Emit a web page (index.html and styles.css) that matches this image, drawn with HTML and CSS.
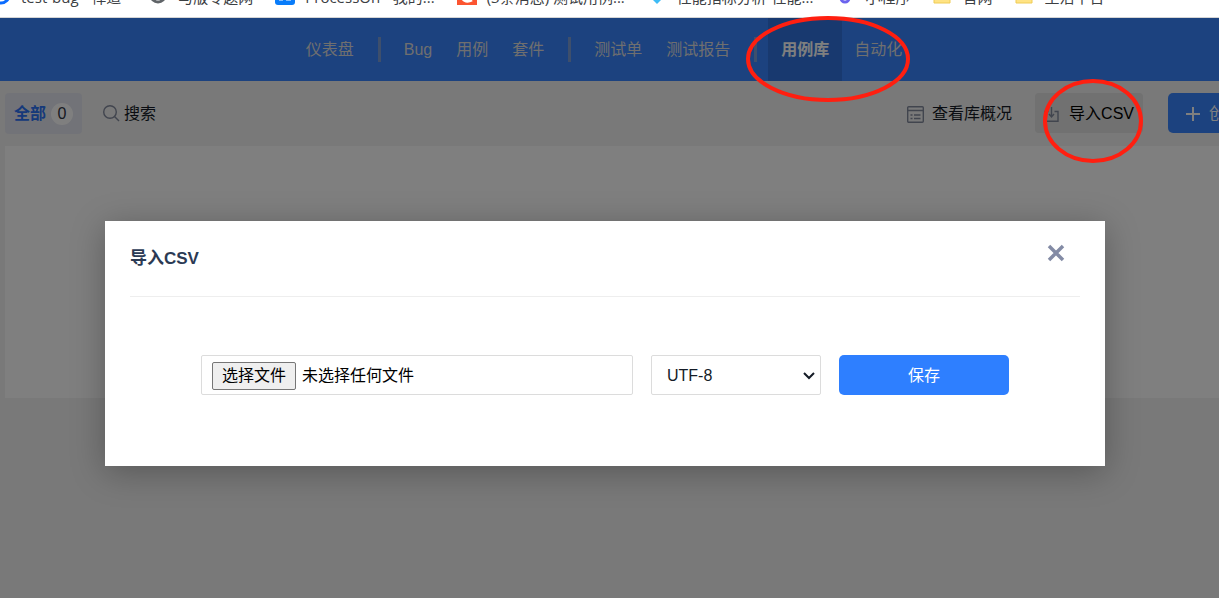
FILE: index.html
```
<!DOCTYPE html>
<html lang="zh-CN">
<head>
<meta charset="utf-8">
<title>导入CSV</title>
<link rel="stylesheet" href="styles.css">
</head>
<body>
<div class="bookmarks">
  <a class="bookmark" href="#"><svg class="favicon" viewBox="0 0 20 20"><circle cx="10" cy="10" r="8" fill="none" stroke="#0a6cff" stroke-width="3"/><path d="M7 9l4 4 5-6" fill="none" stroke="#0a6cff" stroke-width="2"/></svg>test-bug - 禅道</a>
  <a class="bookmark" href="#"><svg class="favicon" viewBox="0 0 20 20"><circle cx="10" cy="10" r="7" fill="none" stroke="#606468" stroke-width="3"/></svg>与版专题网</a>
  <a class="bookmark" href="#"><svg class="favicon" viewBox="0 0 20 20"><rect width="20" height="20" rx="3" fill="#087cfa"/><path d="M4 15h4m3 0h5" stroke="#fff"/></svg>ProcessOn - 我的...</a>
  <a class="bookmark" href="#"><svg class="favicon" viewBox="0 0 20 20"><rect width="20" height="20" fill="#fc5531"/><path d="M14 5c-5-3-9 0-9 5s4 8 10 5" fill="none" stroke="#fff" stroke-width="3"/></svg>(3条消息) 测试用例...</a>
  <a class="bookmark" href="#"><svg class="favicon" viewBox="0 0 20 20"><path d="M4 4h12v9l-6 6-6-6z" fill="#3ebcf6"/></svg>性能指标分析-性能...</a>
  <a class="bookmark" href="#"><svg class="favicon" viewBox="0 0 20 20"><circle cx="10" cy="13" r="4" fill="none" stroke="#6b63ee" stroke-width="3"/></svg>小程序</a>
  <a class="bookmark" href="#"><svg class="favicon" viewBox="0 0 20 20"><path d="M2 3h7l2 3h7v12H2z" fill="#ffe384" stroke="#efcc57"/></svg>官网</a>
  <a class="bookmark" href="#"><svg class="favicon" viewBox="0 0 20 20"><path d="M2 3h7l2 3h7v12H2z" fill="#ffe384" stroke="#efcc57"/></svg>生活平台</a>
</div>

<div class="app">
  <nav class="nav">
    <a class="nav-item" href="#">仪表盘</a>
    <span class="nav-divider"></span>
    <a class="nav-item" href="#">Bug</a>
    <a class="nav-item" href="#">用例</a>
    <a class="nav-item" href="#">套件</a>
    <span class="nav-divider"></span>
    <a class="nav-item" href="#">测试单</a>
    <a class="nav-item" href="#">测试报告</a>
    <span class="nav-divider"></span>
    <a class="nav-item nav-active" href="#">用例库</a>
    <a class="nav-item" href="#">自动化</a>
  </nav>

  <div class="toolbar">
    <button class="filter">全部<span class="count">0</span></button>
    <button class="search"><svg class="icon" viewBox="0 0 17 17"><circle cx="7" cy="7" r="6.3"/><path d="M11.5 11.5L16 16"/></svg>搜索</button>
    <div class="actions">
      <button class="action"><svg class="icon" viewBox="0 0 17 17"><rect x=".7" y=".7" width="15.6" height="15.6" rx="1"/><path d="M1 4.5h15M3.5 9h2M7 9h6.500M3.500 12.500h2M7 12.500h6.500"/></svg>查看库概况</button>
      <button class="action import"><svg class="icon" viewBox="0 0 17 17"><path d="M4.500 5.500H1v9.800h13V5.500h-3.500M7.500 1v9M5 8l2.500 3L10 8"/></svg>导入CSV</button>
      <button class="create"><svg class="plus" viewBox="0 0 16 16"><path d="M8 1v14M1 8h14"/></svg>创建用例</button>
    </div>
  </div>
  <main class="panel"></main>

  <div class="backdrop">
    <section class="modal" role="dialog" aria-labelledby="modal-title">
      <header class="modal-header">
        <h2 class="modal-title" id="modal-title">导入CSV</h2>
        <button class="close" aria-label="关闭"><svg class="close-icon" viewBox="0 0 18 18"><path d="M2 2l14 14M16 2L2 16"/></svg></button>
      </header>
      <form class="form">
        <label class="file"><input class="file-input" type="file"><span class="file-button">选择文件</span>未选择任何文件</label>
        <div class="select-box">
          <select class="select" aria-label="编码"><option>UTF-8</option></select>
          <svg class="chevron" viewBox="0 0 12 8"><path d="M1 1l5 5 5-5"/></svg>
        </div>
        <button class="save" type="button">保存</button>
      </form>
    </section>
  </div>
</div>

<svg class="marks" width="1219" height="200" viewBox="0 0 1219 200">
  <ellipse cx="828" cy="59" rx="80" ry="41"/>
  <ellipse cx="1093" cy="121" rx="48" ry="40"/>
</svg>
</body>
</html>
```
FILE: styles.css
```
* { box-sizing: border-box; }
body {
  margin: 0;
  min-height: 100vh;
  display: flex;
  flex-direction: column;
  overflow: hidden;
  position: relative;
  font: 16px/24px "Liberation Sans", "Noto Sans CJK SC", sans-serif;
  color: #141b26;
}
button, select { font: inherit; color: inherit; border: 0; background: none; padding: 0; }
a { color: inherit; text-decoration: none; }

.bookmarks {
  height: 18px;
  display: flex;
  align-items: flex-end;
  gap: 22px;
  padding: 0 0 10px;
  overflow: hidden;
  background: #fff;
  border-bottom: 1px solid #d5d5d5;
  font: 15px/20px "Open Sans", "Noto Sans CJK SC", sans-serif;
  color: #3c4043;
}
.bookmark { display: flex; align-items: flex-end; gap: 10px; white-space: nowrap; flex: none; }
.bookmark:first-child { margin: 0 5px 0 -9px; }
.favicon { width: 20px; height: 20px; margin-bottom: 2px; }

.app { flex: 1; position: relative; background: #f2f2f2; overflow: hidden; }
.nav {
  height: 63px;
  display: flex;
  justify-content: center;
  align-items: stretch;
  padding-right: 11px;
  background: #3884ff;
  color: #dedede;
}
.nav-item { padding: 0 12px; line-height: 63px; }
.nav-active { background: #3072de; color: #fff; font-weight: bold; padding: 0 13px; }
.nav-divider { width: 3px; height: 25px; margin: 0 11px 0 12px; align-self: center; background: #7c9fd8; }

.toolbar { height: 65px; display: flex; align-items: center; padding: 0 0 1px 5px; }
.filter {
  display: flex;
  align-items: center;
  gap: 5px;
  height: 41px;
  padding: 1px 9px 0;
  border-radius: 4px;
  background: #e5e7f0;
  color: #2c72f5;
  font-weight: bold;
}
.count {
  width: 22px;
  line-height: 22px;
  border-radius: 11px;
  background: #fff;
  color: #303544;
  font-weight: normal;
}
.search { display: flex; align-items: center; gap: 4px; margin-left: 21px; padding-top: 1px; }
.icon { width: 17px; height: 17px; fill: none; stroke: #838a9d; stroke-width: 1.4; }
.actions { display: flex; margin-left: auto; margin-right: -71px; }
.action { display: flex; align-items: center; gap: 8px; height: 40px; padding: 2px 9px 0; }
.import { margin: 0 25px 0 14px; background: #e2e2e2; border-radius: 4px; color: #000; }
.create {
  display: flex;
  align-items: center;
  gap: 8px;
  height: 40px;
  padding: 2px 17px 0;
  border-radius: 5px;
  background: #3884ff;
  color: #fff;
}
.plus { width: 16px; height: 16px; fill: none; stroke: #fff; stroke-width: 2; }
.panel { height: 252px; margin-left: 5px; background: #fff; }

.backdrop {
  position: absolute;
  inset: 0;
  display: flex;
  justify-content: center;
  align-items: flex-start;
  padding: 203px 9px 0 0;
  background: rgba(0, 0, 0, .5);
}
.modal {
  width: 1000px;
  padding: 0 25px 71px;
  background: #fff;
  box-shadow: 0 6px 32px rgba(0, 0, 0, .28);
}
.modal-header {
  display: flex;
  justify-content: space-between;
  align-items: center;
  height: 76px;
  border-bottom: 1px solid #eee;
}
.modal-title { margin: 0; font-size: 17px; color: #2b3a54; }
.close { height: 18px; margin: 0 15px 12px 0; }
.close-icon { display: block; width: 18px; height: 18px; fill: none; stroke: #838ba5; stroke-width: 3.5; }
.form { display: flex; gap: 18px; padding: 58px 71px 0; }
.file {
  flex: 1;
  display: flex;
  align-items: center;
  gap: 6px;
  height: 40px;
  padding: 2px 10px 0;
  border: 1px solid #dcdcdc;
  border-radius: 2px;
  color: #000;
}
.file-input { position: absolute; width: 1px; height: 1px; opacity: 0; }
.file-button {
  height: 28px;
  padding: 0 9px;
  line-height: 26px;
  background: #efefef;
  border: 1px solid #767676;
  border-radius: 2px;
}
.select-box { position: relative; width: 170px; }
.select {
  appearance: none;
  width: 100%;
  height: 40px;
  padding: 1px 15px 0;
  border: 1px solid #dcdcdc;
  border-radius: 2px;
  background: #fff;
}
.chevron {
  position: absolute;
  right: 6px;
  top: 17px;
  width: 12px;
  height: 8px;
  fill: none;
  stroke: #141b26;
  stroke-width: 2;
  pointer-events: none;
}
.save { width: 170px; height: 40px; padding-top: 1px; border-radius: 5px; background: #2e7fff; color: #fff; }

.marks { position: absolute; left: 0; top: 0; fill: none; stroke: #ff1f10; stroke-width: 4; pointer-events: none; }
```
